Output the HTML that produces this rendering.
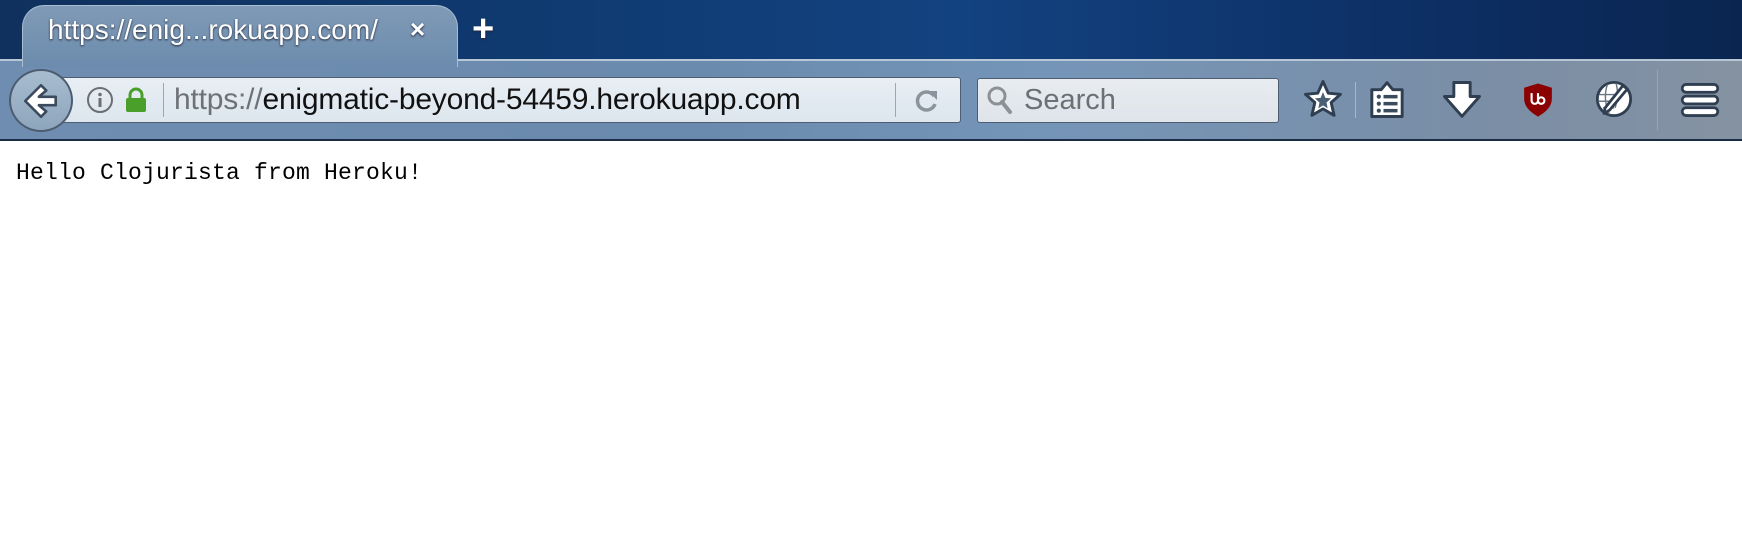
<!DOCTYPE html>
<html><head><meta charset="utf-8"><style>
*{margin:0;padding:0;box-sizing:border-box}
body{width:1742px;height:538px;overflow:hidden;background:#fff;position:relative;font-family:"Liberation Sans",sans-serif}
#top{position:absolute;left:0;top:0;width:1742px;height:60px;background:linear-gradient(90deg,#10315e 0%,#0f3a70 30%,#134280 55%,#0d3066 80%,#0a2550 100%)}
#tab{position:absolute;left:22px;top:5px;width:436px;height:62px;border-radius:22px 22px 0 0;background:linear-gradient(#7f9ab6,#6c8cad);border:1px solid #a9bdd0;border-bottom:none}
#tb{position:absolute;left:0;top:59px;width:1742px;height:82px;background:linear-gradient(90deg,#6f8db0 0%,#6a8aae 40%,#7595b8 60%,#7a8ea6 85%,#8592a2 100%);border-top:2px solid #b8c7d6;border-bottom:2px solid #1b2d44}
.t{position:absolute;color:#fff;font-size:28px;text-shadow:0 1px 2px #223}
#url{position:absolute;left:52px;top:77px;width:909px;height:46px;background:linear-gradient(#e8eef4,#dde6ee);border:1px solid #4d5e72;border-radius:3px}
#search{position:absolute;left:977px;top:78px;width:302px;height:45px;background:linear-gradient(#e8ecf0,#dfe4ea);border:1px solid #4d5e72;border-radius:3px}
#back{position:absolute;left:9px;top:69px;width:64px;height:63px;border-radius:50%;background:linear-gradient(#a7bccf,#8ea6bd);border:2px solid #4c5d70}
.div{position:absolute;width:1px;background:#a4b2c0}
#txt{position:absolute;left:16px;top:160px;font-family:"Liberation Mono",monospace;font-size:23px;color:#000;letter-spacing:0.2px}
</style></head><body>
<div id="top"></div>
<div id="tb"></div>
<div id="tab"></div>
<div class="t" style="left:48px;top:14px">https://enig...rokuapp.com/</div>
<div class="t" style="left:410px;top:14px;font-size:26px;font-weight:bold">×</div>
<div class="t" style="left:472px;top:8px;font-size:38px;font-weight:bold">+</div>
<div id="url"></div>
<div id="back"></div>
<svg style="position:absolute;left:20px;top:80px" width="42" height="42" viewBox="0 0 40 38"><path d="M20 4 L5 19 L20 34 L25 29 L18 23 H34 V15 H18 L25 9 Z" fill="#fff" stroke="#3b4a5c" stroke-width="2.5" stroke-linejoin="round"/></svg>
<svg style="position:absolute;left:86px;top:86px" width="28" height="28"><circle cx="14" cy="14" r="12" fill="none" stroke="#6b6f74" stroke-width="2"/><circle cx="14" cy="8.5" r="1.8" fill="#6b6f74"/><rect x="12.5" y="12" width="3" height="9" fill="#6b6f74"/></svg>
<svg style="position:absolute;left:125px;top:87px" width="22" height="26"><path d="M5 11 V8 a6 6 0 0 1 12 0 V11" fill="none" stroke="#4a9e2a" stroke-width="3"/><rect x="1" y="11" width="20" height="14" rx="2" fill="#4a9e2a"/></svg>
<div class="div" style="left:163px;top:83px;height:34px;background:#9aa"></div>
<div style="position:absolute;left:174px;top:83px;font-size:30px;color:#111;letter-spacing:-0.2px"><span style="color:#6e7175">https://</span>enigmatic-beyond-54459.herokuapp.com</div>
<div class="div" style="left:895px;top:83px;height:34px;background:#9aa"></div>
<svg style="position:absolute;left:914px;top:88px" width="26" height="26" viewBox="0 0 26 26"><path d="M20 8 A9 9 0 1 0 21 16" fill="none" stroke="#8b949c" stroke-width="3.5"/><path d="M14 3 L23 3 L23 12 Z" fill="#8b949c"/></svg>
<div id="search"></div>
<svg style="position:absolute;left:985px;top:84px" width="30" height="32"><circle cx="12" cy="12" r="8" fill="none" stroke="#8d9094" stroke-width="3"/><path d="M17 18 L25 28" stroke="#8d9094" stroke-width="4" stroke-linecap="round"/></svg>
<div style="position:absolute;left:1024px;top:84px;font-size:29px;color:#6c6f73">Search</div>
<svg style="position:absolute;left:1302px;top:78px" width="42" height="42" viewBox="0 0 36 36"><path d="M18 3 L22.5 13 L33 14 L25 21 L27.5 32 L18 26.5 L8.5 32 L11 21 L3 14 L13.5 13 Z" fill="#fff" stroke="#2f3e50" stroke-width="2.5" stroke-linejoin="round"/><path d="M18 12 L20 17 L25 17.5 L21 21 L22 26 L18 23.5 L14 26 L15 21 L11 17.5 L16 17 Z" fill="#4a5e74"/></svg>
<div class="div" style="left:1355px;top:82px;height:36px;background:#a9b6c3"></div>
<svg style="position:absolute;left:1367px;top:78px" width="40" height="42" viewBox="0 0 34 36"><path d="M4 10 H12 L17 4 L22 10 H30 V33 H4 Z" fill="#fff" stroke="#2f3e50" stroke-width="2.5" stroke-linejoin="round"/><g fill="#3a4b5e"><circle cx="10" cy="16" r="1.8"/><circle cx="10" cy="22" r="1.8"/><circle cx="10" cy="28" r="1.8"/><rect x="14" y="14.5" width="12" height="3"/><rect x="14" y="20.5" width="12" height="3"/><rect x="14" y="26.5" width="12" height="3"/></g></svg>
<svg style="position:absolute;left:1441px;top:79px" width="42" height="42" viewBox="0 0 36 36"><path d="M11 3 H25 V15 H33 L18 32 L3 15 H11 Z" fill="#fff" stroke="#2f3e50" stroke-width="2.5" stroke-linejoin="round"/></svg>
<svg style="position:absolute;left:1522px;top:81px" width="32" height="37" viewBox="0 0 30 34"><path d="M15 2 L28 6 V16 C28 24 22 29 15 33 C8 29 2 24 2 16 V6 Z" fill="#8b0000"/><path d="M9 11 V18 a3 3 0 0 0 6 0 V11 M15 18 a3 3 0 0 0 6 0 a3 3 0 0 0 -6 0" fill="none" stroke="#fff" stroke-width="2"/></svg>
<svg style="position:absolute;left:1594px;top:79px" width="40" height="40" viewBox="0 0 36 36"><circle cx="18" cy="18" r="15" fill="#fff" stroke="#2f3e50" stroke-width="2.5"/><g stroke="#6a7785" stroke-width="1.3" fill="none"><path d="M5 14 H26 M4 20 H22 M8 26 H18 M12 5 C9 14 10 24 14 32 M20 4 C22 12 21 20 19 26"/></g><path d="M30 9 L14 28 L9 31 L10 26 L26 6 Z" fill="#fff" stroke="#2f3e50" stroke-width="2.5" stroke-linejoin="round"/></svg>
<div class="div" style="left:1657px;top:70px;height:60px;background:#98a5b2"></div>
<svg style="position:absolute;left:1680px;top:81px" width="40" height="38" viewBox="0 0 36 34"><g fill="#fff" stroke="#2f3e50" stroke-width="2.5"><rect x="2" y="3" width="32" height="7" rx="3.5"/><rect x="2" y="13.5" width="32" height="7" rx="3.5"/><rect x="2" y="24" width="32" height="7" rx="3.5"/></g></svg>
<div id="txt">Hello Clojurista from Heroku!</div>
</body></html>
